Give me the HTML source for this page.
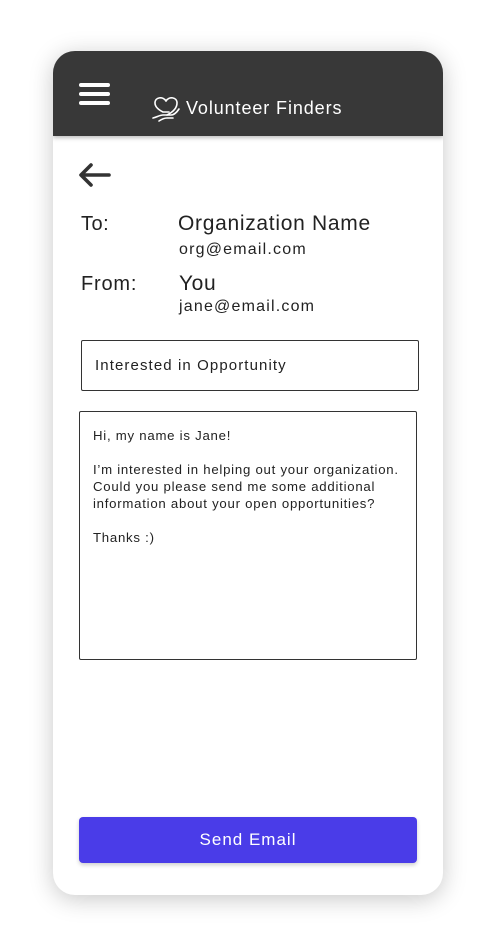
<!DOCTYPE html>
<html><head><meta charset="utf-8"><style>
*{margin:0;padding:0;box-sizing:border-box}
body{width:496px;height:946px;background:#fff;font-family:"Liberation Sans",sans-serif;position:relative;overflow:hidden}
.card{position:absolute;left:53px;top:51px;width:390px;height:844px;background:#fff;border-radius:22px;box-shadow:0 4px 24px rgba(0,0,0,.22);overflow:hidden}
.hdr{position:absolute;left:0;top:0;width:390px;height:85px;background:#383838;box-shadow:0 2px 4px rgba(0,0,0,.25)}
.bar{position:absolute;left:26px;width:31px;height:4px;background:#fff;border-radius:2px}
.t{position:absolute;color:#222;white-space:nowrap}
.box{position:absolute;border:1.5px solid #333;border-radius:2px}
</style></head><body>
<div class="card">
 <div class="hdr">
  <div class="bar" style="top:32px"></div><div class="bar" style="top:41px"></div><div class="bar" style="top:50px"></div>
  <svg style="position:absolute;left:98px;top:43px" width="30" height="30" viewBox="0 0 30 30" fill="none" stroke="#fff" stroke-width="1.6" stroke-linecap="round" stroke-linejoin="round">
   <path d="M15 7C12 2 4 3 4 9c0 4 4 7 8 9h6"/><path d="M15 7c3-5 11-4 11 2 0 5-4 9-10 12"/><path d="M2 24c4-1 7-3 10-3h8c3 0 6-3 8-6"/><path d="M8 27c3-2 5-3 8-3h6"/>
  </svg>
  <div class="t" style="left:133px;top:47px;font-size:18px;color:#fff;letter-spacing:0.9px">Volunteer Finders</div>
 </div>
 <svg style="position:absolute;left:25px;top:111px" width="34" height="26" viewBox="0 0 34 26" fill="none" stroke="#333" stroke-width="3.6" stroke-linecap="round" stroke-linejoin="round"><path d="M31 13H4M13 3L3 13l10 10"/></svg>
 <div class="t" style="left:28px;top:162px;font-size:20px;letter-spacing:0.5px">To:</div>
 <div class="t" style="left:125px;top:161px;font-size:21px;letter-spacing:0.7px">Organization Name</div>
 <div class="t" style="left:126px;top:190px;font-size:16px;letter-spacing:1.2px">org@email.com</div>
 <div class="t" style="left:28px;top:222px;font-size:20px;letter-spacing:0.8px">From:</div>
 <div class="t" style="left:126px;top:221px;font-size:21px;letter-spacing:0.6px">You</div>
 <div class="t" style="left:126px;top:247px;font-size:16px;letter-spacing:1.2px">jane@email.com</div>
 <div class="box" style="left:28px;top:289px;width:338px;height:51px"></div>
 <div class="t" style="left:42px;top:306px;font-size:15px;letter-spacing:1.1px">Interested in Opportunity</div>
 <div class="box" style="left:26px;top:360px;width:338px;height:249px"></div>
 <div class="t" style="left:40px;top:376px;font-size:13.2px;line-height:17px;letter-spacing:0.75px">Hi, my name is Jane!<br><br>I’m interested in helping out your organization.<br>Could you please send me some additional<br>information about your open opportunities?<br><br>Thanks :)</div>
 <div style="position:absolute;left:26px;top:766px;width:338px;height:46px;background:#4a3ce8;border-radius:4px;color:#fff;font-size:17px;letter-spacing:1px;text-align:center;line-height:46px;box-shadow:0 2px 4px rgba(0,0,0,.2)">Send Email</div>
</div>
</body></html>
